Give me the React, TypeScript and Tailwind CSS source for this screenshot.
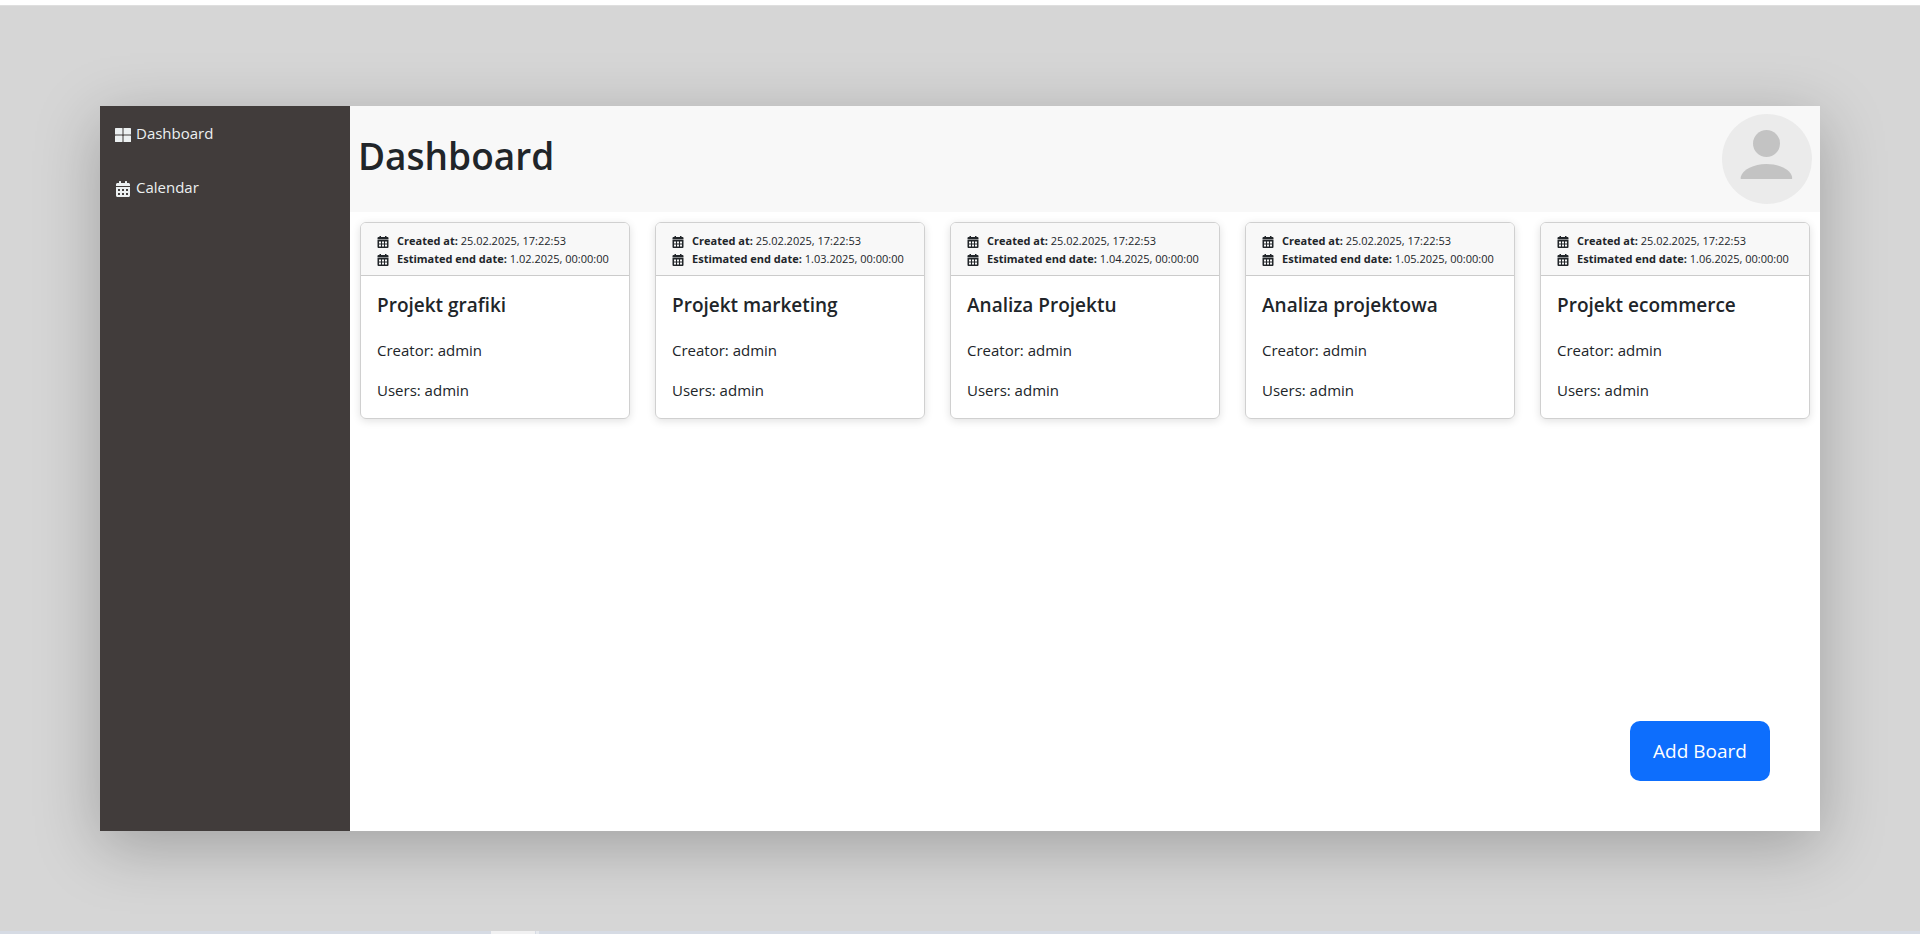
import { FaCalendarAlt } from "react-icons/fa";

const boards = [
  { title: "Projekt grafiki", end: "1.02.2025, 00:00:00" },
  { title: "Projekt marketing", end: "1.03.2025, 00:00:00" },
  { title: "Analiza Projektu", end: "1.04.2025, 00:00:00" },
  { title: "Analiza projektowa", end: "1.05.2025, 00:00:00" },
  { title: "Projekt ecommerce", end: "1.06.2025, 00:00:00" },
];

function TilesIcon() {
  return (
    <svg viewBox="0 0 16 14" className="mt-1 h-3.5 w-4" fill="currentColor" aria-hidden="true">
      <rect width="7.5" height="6.5" rx="0.6" />
      <rect x="8.5" width="7.5" height="6.5" rx="0.6" />
      <rect y="7.5" width="7.5" height="6.5" rx="0.6" />
      <rect x="8.5" y="7.5" width="7.5" height="6.5" rx="0.6" />
    </svg>
  );
}

function SmallCalendar() {
  return (
    <svg viewBox="0 0 12 12" className="mt-1 h-3 w-3 shrink-0" fill="currentColor" aria-hidden="true">
      <path d="M2.500 1V0h1.500v1h4V0h1.500v1H10.500a1 1 0 0 1 1 1v1.400H.5V2a1 1 0 0 1 1-1z" />
      <path
        fillRule="evenodd"
        d="M.5 4h11v7a1 1 0 0 1-1 1h-9a1 1 0 0 1-1-1zM2 5.500v2h2v-2zM5 5.500v2h2v-2zM8 5.500v2h2v-2zM2 8.600v2h2v-2zM5 8.600v2h2v-2zM8 8.600v2h2v-2z"
      />
    </svg>
  );
}

function DateLine({ label, value }: { label: string; value: string }) {
  return (
    <p className="flex gap-2 whitespace-nowrap text-[11px] leading-[18px]">
      <SmallCalendar />
      <span>
        <b>{label}</b> {value}
      </span>
    </p>
  );
}

export default function App() {
  return (
    <div className="flex min-h-screen flex-col border-t-[5px] border-t-white bg-[#d6d6d6] font-['Open_Sans','Noto_Sans',sans-serif] text-[#212529]">
      <div className="h-px bg-[#dfdfdf]" />
      <div className="m-[100px] flex flex-1 bg-white shadow-[0_15px_60px_rgba(0,0,0,0.25)]">
        <nav className="flex w-[250px] shrink-0 flex-col gap-[30px] bg-[#413c3b] px-[15px] py-[15px] text-[15px] leading-6 text-[#ecf0f1]">
          <a href="#dashboard" className="flex items-center gap-[5px]">
            <TilesIcon />
            Dashboard
          </a>
          <a href="#calendar" className="flex items-center gap-[5px]">
            <FaCalendarAlt className="mt-1 h-4 w-4" />
            Calendar
          </a>
        </nav>
        <main className="flex min-w-0 flex-1 flex-col">
          <header className="flex items-center justify-between bg-[#f8f8f8] p-2">
            <h1 className="pb-1.5 text-[37px] leading-12 font-semibold">Dashboard</h1>
            <svg viewBox="0 0 90 90" className="size-[90px]" role="img" aria-label="User">
              <circle cx="45" cy="45" r="45" fill="#ebebeb" />
              <circle cx="44.5" cy="29.5" r="13.5" fill="#c3c3c3" />
              <path d="M18.700 65v-2c2-7.500 13-13 25.700-13s23.800 5.500 25.700 13v2z" fill="#c3c3c3" />
            </svg>
          </header>
          <section className="grid grid-cols-5 gap-[25px] p-2.5">
            {boards.map((b) => (
              <article
                key={b.title}
                className="overflow-hidden rounded-md border border-[#d0d0d0] shadow-[0_2px_8px_rgba(0,0,0,0.12)]"
              >
                <div className="border-b border-[#cbcbcb] bg-[#f8f8f8] px-4 pt-[9px] pb-[7px]">
                  <DateLine label="Created at:" value="25.02.2025, 17:22:53" />
                  <DateLine label="Estimated end date:" value={b.end} />
                </div>
                <div className="flex flex-col gap-4 px-4 pt-[17px] pb-4 text-[15px] leading-6">
                  <h2 className="mb-[5px] text-[19px] font-semibold">{b.title}</h2>
                  <p>Creator: admin</p>
                  <p>Users: admin</p>
                </div>
              </article>
            ))}
          </section>
          <button
            type="button"
            className="mt-auto mr-[50px] mb-[50px] h-[60px] w-[140px] self-end rounded-[10px] bg-[#0d6efd] text-[19px] text-white"
          >
            Add Board
          </button>
        </main>
      </div>
      <div className="flex h-[3px] gap-px bg-[#d6dbe4] pl-[491px]">
        <div className="w-11 bg-[#f1f1f2]" />
        <div className="w-[3px] bg-[#e6e9ee]" />
      </div>
    </div>
  );
}
